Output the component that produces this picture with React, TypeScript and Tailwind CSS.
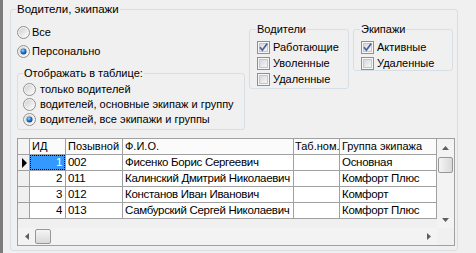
import type { ReactNode } from "react"

const rows = [
  { id: 1, call: "002", name: "Фисенко Борис Сергеевич", tab: "", group: "Основная" },
  { id: 2, call: "011", name: "Калинский Дмитрий Николаевич", tab: "", group: "Комфорт Плюс" },
  { id: 3, call: "012", name: "Констанов Иван Иванович", tab: "", group: "Комфорт" },
  { id: 4, call: "013", name: "Самбурский Сергей Николаевич", tab: "", group: "Комфорт Плюс" },
]

function Radio({ checked }: { checked?: boolean }) {
  return (
    <svg width="13" height="13" viewBox="0 0 13 13" className="shrink-0">
      <defs>
        <linearGradient id="rbg" x1="0" y1="0" x2="1" y2="1">
          <stop offset="0" stopColor="#cfcfcf" />
          <stop offset="1" stopColor="#fdfdfd" />
        </linearGradient>
        <radialGradient id="rdot" cx="0.4" cy="0.35" r="0.7">
          <stop offset="0" stopColor="#9ddcff" />
          <stop offset="0.45" stopColor="#2a7fd0" />
          <stop offset="1" stopColor="#0b3b80" />
        </radialGradient>
      </defs>
      <circle cx="6.5" cy="6.5" r="6" fill="#f4f4f4" stroke="#8e8f8f" />
      <circle cx="6.5" cy="6.5" r="4.5" fill="url(#rbg)" />
      {checked && <circle cx="6.5" cy="6.5" r="3" fill="url(#rdot)" />}
    </svg>
  )
}

function Check({ checked }: { checked?: boolean }) {
  return (
    <svg width="13" height="13" viewBox="0 0 13 13" className="shrink-0">
      <defs>
        <linearGradient id="cbg" x1="0" y1="0" x2="1" y2="1">
          <stop offset="0" stopColor="#d3d6dc" />
          <stop offset="1" stopColor="#f8f8f8" />
        </linearGradient>
      </defs>
      <rect x="0.5" y="0.5" width="12" height="12" fill="#f7f7f7" stroke="#8e8f8f" />
      <rect x="2.5" y="2.5" width="8" height="8" fill="url(#cbg)" stroke="#c4c6ca" />
      {checked && <path d="M3 6.2 L5.4 9.2 L10.2 2.6" fill="none" stroke="#4d5f96" strokeWidth="1.7" />}
    </svg>
  )
}

function GroupBox({ title, className, titleClass = "", children }: { title: string; className: string; titleClass?: string; children: ReactNode }) {
  return (
    <div className={`relative rounded-[3px] border border-[#d5dfe5] ${className}`}>
      <span className={`absolute left-[5px] top-[-9px] bg-[#f0f0f0] px-px leading-[16px] whitespace-nowrap ${titleClass}`}>{title}</span>
      {children}
    </div>
  )
}

function Arrow({ dir }: { dir: "up" | "down" | "left" | "right" }) {
  const pts = { up: "0,4 3.5,0 7,4", down: "0,0 7,0 3.5,4", left: "4,0 4,7 0,3.5", right: "0,0 4,3.5 0,7" }[dir]
  const vert = dir === "up" || dir === "down"
  return (
    <svg width={vert ? 7 : 4} height={vert ? 4 : 7}>
      <polygon points={pts} fill="#5f5f5f" />
    </svg>
  )
}

export default function App() {
  return (
    <div className="flex h-[253px] w-[476px] overflow-hidden bg-[#f0f0f0] font-['Liberation_Sans','DejaVu_Sans',sans-serif] text-[11px] text-black">
      <div className="w-[3px] shrink-0 bg-[#7c7c7c]" />

      <div className="ml-[7px] mt-[9px] h-[242px] w-[448px] shrink-0">
        <GroupBox title="Водители, экипажи" titleClass="text-[11.5px]" className="h-full w-full pl-[6px]">
          <div className="flex">
            <div className="w-[228px]">
              <div className="mt-[14px] flex h-[16px] items-center gap-[2px]"><Radio /> <span className="leading-[16px]">Все</span></div>
              <div className="mt-[3px] flex h-[16px] items-center gap-[2px]"><Radio checked /> <span className="leading-[16px]">Персонально</span></div>
              <GroupBox title="Отображать в таблице:" className="mt-[14px] h-[57px] pl-[5px] pt-[8px]">
                {["только водителей", "водителей, основные экипаж и группу", "водителей, все экипажи и группы"].map((s, i) => (
                  <div key={s} className="flex h-[15px] items-center gap-[4px]">
                    <Radio checked={i === 2} />
                    <span className="leading-[15px] whitespace-nowrap">{s}</span>
                  </div>
                ))}
              </GroupBox>
            </div>

            <GroupBox title="Водители" titleClass="left-[6px]" className="ml-[4px] mt-[19px] h-[60px] w-[100px] pl-[7px] pt-[9px]">
              {[["Работающие", true], ["Уволенные", false], ["Удаленные", false]].map(([s, c]) => (
                <div key={s as string} className="flex h-[16px] items-center gap-[3px]">
                  <Check checked={c as boolean} />
                  <span className="leading-[16px]">{s}</span>
                </div>
              ))}
            </GroupBox>

            <GroupBox title="Экипажи" titleClass="left-[6px]" className="ml-[4px] mt-[19px] h-[42px] w-[100px] pl-[7px] pt-[9px]">
              {[["Активные", true], ["Удаленные", false]].map(([s, c]) => (
                <div key={s as string} className="flex h-[16px] items-center gap-[3px]">
                  <Check checked={c as boolean} />
                  <span className="leading-[16px]">{s}</span>
                </div>
              ))}
            </GroupBox>
          </div>

          {/* grid */}
          <div className="mt-[8px] flex h-[108px] w-[438px] flex-col border border-[#a0a0a0] bg-[#f0f0f0]">
            <div className="flex flex-1">
              <div className="w-[419px]">
                <div className="flex h-[16px] border-b border-[#a0a0a0] bg-[#fbfbfb] leading-[15px]">
                  <div className="w-[12px] border-r border-[#a0a0a0] bg-[#f4f4f4]" />
                  <div className="w-[36px] border-r border-[#a0a0a0] pl-[2px]">ИД</div>
                  <div className="w-[57px] border-r border-[#a0a0a0] pl-[2px]">Позывной</div>
                  <div className="w-[171px] border-r border-[#a0a0a0] pl-[2px]">Ф.И.О.</div>
                  <div className="w-[46px] border-r border-[#a0a0a0] pl-px">Таб.ном.</div>
                  <div className="w-[97px] border-r border-[#a0a0a0] pl-[2px] whitespace-nowrap">Группа экипажа</div>
                </div>
                {rows.map((r, i) => (
                  <div key={r.id} className="flex h-[16px] border-b border-[#a0a0a0] bg-white text-[11.5px] leading-[15px] tracking-[-0.3px]">
                    <div className="flex w-[12px] items-center border-r border-[#a0a0a0] bg-[#f0f0f0] pl-[4px]">
                      {i === 0 && (
                        <svg width="5" height="10"><polygon points="0,0 5,5 0,10" fill="#000" /></svg>
                      )}
                    </div>
                    {i === 0 ? (
                      <div className="w-[36px] border-r border-[#a0a0a0] bg-[#3399ff] text-white">
                        <div className="h-full border border-dotted border-black pr-[2px] text-right leading-[13px]">{r.id}</div>
                      </div>
                    ) : (
                      <div className="w-[36px] border-r border-[#a0a0a0] pr-[3px] text-right">{r.id}</div>
                    )}
                    <div className="w-[57px] border-r border-[#a0a0a0] pl-[2px]">{r.call}</div>
                    <div className="w-[171px] overflow-hidden whitespace-nowrap border-r border-[#a0a0a0] pl-[2px]">{r.name}</div>
                    <div className="w-[46px] border-r border-[#a0a0a0] pl-[2px]">{r.tab}</div>
                    <div className="w-[97px] overflow-hidden whitespace-nowrap border-r border-[#a0a0a0] pl-[2px]">{r.group}</div>
                  </div>
                ))}
              </div>

              <div className="flex w-[17px] flex-col bg-[#f3f3f3]">
                <div className="flex h-[17px] items-center justify-center"><Arrow dir="up" /></div>
                <div className="mx-px mt-px h-[16px] rounded-[2px] border border-[#979797] bg-linear-to-r from-[#f5f5f5] to-[#d9d9d9]" />
                <div className="flex-1" />
                <div className="flex h-[17px] items-center justify-center"><Arrow dir="down" /></div>
              </div>
            </div>

            <div className="flex h-[17px]">
              <div className="flex w-[419px] bg-[#f3f3f3]">
                <div className="flex w-[17px] items-center justify-center"><Arrow dir="left" /></div>
                <div className="my-px w-[16px] rounded-[2px] border border-[#979797] bg-linear-to-b from-[#f5f5f5] to-[#d9d9d9]" />
                <div className="flex-1" />
                <div className="flex w-[17px] items-center justify-center"><Arrow dir="right" /></div>
              </div>
              <div className="w-[17px] bg-[#f0f0f0]" />
            </div>
          </div>
        </GroupBox>
      </div>
    </div>
  )
}
